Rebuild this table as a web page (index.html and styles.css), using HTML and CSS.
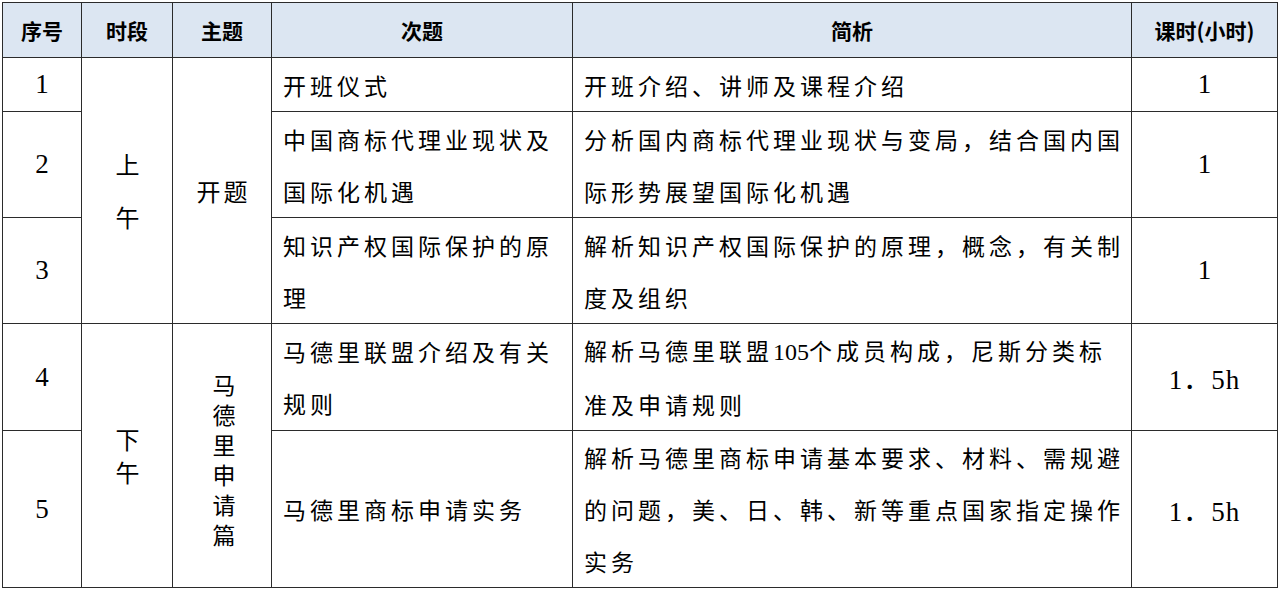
FILE: index.html
```html
<!DOCTYPE html>
<html lang="zh-CN">
<head>
<meta charset="utf-8">
<title>课程安排</title>
<link rel="stylesheet" href="styles.css">
</head>
<body>
<table class="plan">
  <colgroup>
    <col class="c1"><col class="c2"><col class="c3"><col class="c4"><col class="c5"><col class="c6">
  </colgroup>
  <thead>
    <tr class="head">
      <th>序号</th><th>时段</th><th>主题</th><th>次题</th><th>简析</th><th class="hours">课时(小时)</th>
    </tr>
  </thead>
  <tbody>
    <tr class="r1">
      <td class="num">1</td>
      <td class="period" rowspan="3"><span class="vtext am">上午</span></td>
      <td class="topic" rowspan="3">开题</td>
      <td class="txt">开班仪式</td>
      <td class="txt desc">开班介绍、讲师及课程介绍</td>
      <td class="num hours">1</td>
    </tr>
    <tr class="r2">
      <td class="num">2</td>
      <td class="txt">中国商标代理业现状及<br>国际化机遇</td>
      <td class="txt desc">分析国内商标代理业现状与变局，结合国内国<br>际形势展望国际化机遇</td>
      <td class="num hours">1</td>
    </tr>
    <tr class="r3">
      <td class="num">3</td>
      <td class="txt">知识产权国际保护的原<br>理</td>
      <td class="txt desc">解析知识产权国际保护的原理，概念，有关制<br>度及组织</td>
      <td class="num hours">1</td>
    </tr>
    <tr class="r4">
      <td class="num">4</td>
      <td class="period" rowspan="2"><span class="vtext pm">下午</span></td>
      <td class="topic" rowspan="2"><span class="vtext mad">马德里申请篇</span></td>
      <td class="txt">马德里联盟介绍及有关<br>规则</td>
      <td class="txt desc">解析马德里联盟<span class="lat">105</span>个成员构成，尼斯分类标<br>准及申请规则</td>
      <td class="num hours dec">1．5h</td>
    </tr>
    <tr class="r5">
      <td class="num soft">5</td>
      <td class="txt soft">马德里商标申请实务</td>
      <td class="txt desc soft">解析马德里商标申请基本要求、材料、需规避<br>的问题，美、日、韩、新等重点国家指定操作<br>实务</td>
      <td class="num hours dec soft">1．5h</td>
    </tr>
  </tbody>
</table>
</body>
</html>
```

FILE: styles.css
```css
html, body {
  margin: 0;
  padding: 0;
  background: #ffffff;
}

body {
  padding: 2px 0 0 2px;
}

.plan {
  border-collapse: collapse;
  table-layout: fixed;
  width: 1275px;
  color: #000;
  font-family: "Liberation Serif", "Noto Sans CJK SC", serif;
}

.c1 { width: 79px; }
.c2 { width: 91px; }
.c3 { width: 99px; }
.c4 { width: 301px; }
.c5 { width: 559px; }
.c6 { width: 146px; }

.plan th,
.plan td {
  border: 1px solid #2b2b2b;
  padding: 0;
  vertical-align: middle;
}

.plan .head th {
  background: #dce6f2;
  height: 54px;
  font-family: "Noto Sans CJK SC", sans-serif;
  font-weight: 700;
  font-size: 21px;
  text-align: center;
  border-left-color: #9aa3ad;
}

.plan .head th:first-child {
  border-left-color: #2b2b2b;
}

.plan .hours {
  border-left: 1px solid #8a8a8a;
}

.plan .desc {
  border-left: 1px solid #8a8a8a;
}

.r1 td { height: 53px; }
.r2 td { height: 105px; }
.r3 td { height: 105px; }
.r4 td { height: 105px; }
.r5 td { height: 156px; }

.plan .num {
  text-align: center;
  font-family: "Liberation Serif", "Noto Sans CJK SC", serif;
  font-size: 27px;
}

.plan .dec {
  letter-spacing: 1px;
}

.plan .txt {
  font-family: "Noto Sans CJK SC", sans-serif;
  font-size: 23px;
  letter-spacing: 4px;
  line-height: 52px;
  padding: 0 0 0 11px;
  white-space: nowrap;
}

.plan .lat {
  font-family: "Liberation Serif", serif;
  letter-spacing: 0;
  font-size: 24px;
}

.plan .period,
.plan .topic {
  text-align: center;
  font-family: "Noto Sans CJK SC", sans-serif;
  font-size: 24px;
}

.plan .topic {
  letter-spacing: 3px;
  padding-left: 3px;
}

.vtext {
  display: inline-block;
  writing-mode: vertical-rl;
  line-height: 1;
}

.am {
  font-size: 24px;
  letter-spacing: 29px;
  padding-top: 37px;
}

.pm {
  font-size: 24px;
  letter-spacing: 9px;
  padding-top: 17px;
}

.plan .topic .mad {
  font-size: 23px;
  letter-spacing: 7px;
  padding-top: 23px;
}

.plan .soft {
  border-top: 1px solid #9a9a9a;
}
```
